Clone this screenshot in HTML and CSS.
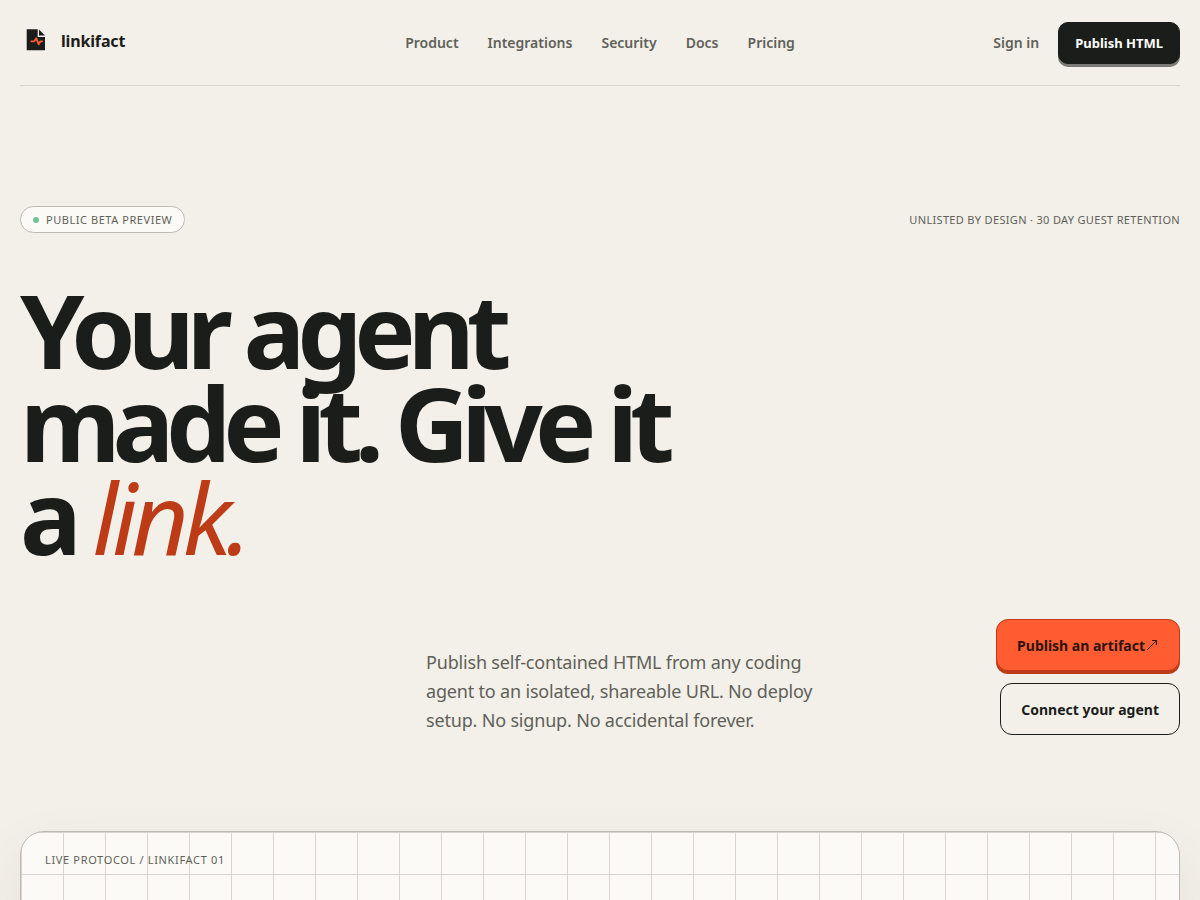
FILE: index.html
```html
<!DOCTYPE html>
<html lang="en">
<head>
    <meta charset="UTF-8">
    <meta name="viewport" content="width=device-width, initial-scale=1.0">
    <title>linkifact</title>
    <link rel="stylesheet" href="styles.css">
</head>
<body>
    <div class="page">
        <header class="site-header">
            <a class="brand" href="#">
                <svg class="brand-mark" viewBox="0 0 32 32" aria-hidden="true">
                    <path fill="#1b1d1a" d="M6.700 4.300h11v7.700H25v13.300H6.700z"/>
                    <path fill="#1b1d1a" d="M19 4.500L25 10.500h-6z"/>
                    <path fill="none" stroke="#ff5c31" stroke-width="1.800" stroke-linejoin="round" stroke-linecap="round" d="M11.300 16.300h3l2-3 2.400 6 1.600-3h1.800"/>
                </svg>
                <span>linkifact</span>
            </a>
            <nav class="site-nav">
                <a href="#">Product</a>
                <a href="#">Integrations</a>
                <a href="#">Security</a>
                <a href="#">Docs</a>
                <a href="#">Pricing</a>
            </nav>
            <div class="header-actions">
                <a class="sign-in" href="#">Sign in</a>
                <a class="button button-dark" href="#">Publish HTML</a>
            </div>
        </header>

        <main>
            <section class="hero">
                <div class="hero-meta">
                    <span class="pill"><span class="pill-dot"></span>Public beta preview</span>
                    <span class="hero-note">Unlisted by design · 30 day guest retention</span>
                </div>
                <h1>Your agent made it. Give it a <em>link.</em></h1>
                <div class="hero-bottom">
                    <p class="hero-copy">Publish self-contained HTML from any coding agent to an isolated, shareable URL. No deploy setup. No signup. No accidental forever.</p>
                    <div class="hero-actions">
                        <a class="button button-primary" href="#">
                            Publish an artifact
                            <svg class="arrow" viewBox="0 0 14 14" aria-hidden="true">
                                <path fill="none" stroke="currentColor" d="M2 12L11 3M7 2.500h4.500v4.500"/>
                            </svg>
                        </a>
                        <a class="button button-outline" href="#">Connect your agent</a>
                    </div>
                </div>
            </section>

            <section class="protocol">
                <p class="protocol-label">Live protocol / linkifact 01</p>
            </section>
        </main>
    </div>
</body>
</html>
```
FILE: styles.css
```css
:root {
    --ink: #1b1d1a;
    --muted: #5f6159;
    --paper: #f3f0e9;
    --card: #fcfaf6;
    --line: #d8d5ce;
    --line-strong: #bcbab2;
    --orange: #ff5c31;
    --rust: #bd3b17;
}

* {
    box-sizing: border-box;
}

body {
    margin: 0;
    background: var(--paper);
    color: var(--ink);
    font-family: "Noto Sans", sans-serif;
    font-size: 16px;
    overflow-x: hidden;
}

a {
    color: inherit;
    text-decoration: none;
}

.page {
    max-width: 1400px;
    margin: 0 auto;
    padding: 0 20px;
}

/* Header */
.site-header {
    display: grid;
    grid-template-columns: 1fr auto 1fr;
    align-items: center;
    min-height: 86px;
    border-bottom: 1px solid var(--line);
}

.brand {
    display: flex;
    align-items: center;
    gap: 9px;
    padding-bottom: 4px;
    font-size: 16px;
    font-weight: 700;
    letter-spacing: -0.01em;
}

.brand-mark {
    width: 32px;
    height: 32px;
}

.site-nav {
    display: flex;
    gap: 29px;
    color: var(--muted);
    font-size: 14px;
    font-weight: 600;
}

.header-actions {
    display: flex;
    align-items: center;
    justify-content: flex-end;
    gap: 19px;
}

.sign-in {
    color: var(--muted);
    font-size: 14px;
    font-weight: 600;
}

.button {
    display: inline-flex;
    align-items: center;
    justify-content: center;
    min-height: 52px;
    padding: 0 20px;
    border: 1px solid var(--ink);
    border-radius: 12px;
    font-size: 14px;
    font-weight: 700;
}

.button-dark {
    min-height: 42px;
    padding: 0 16px;
    border-radius: 10px;
    background: var(--ink);
    color: #ffffff;
    font-size: 13px;
    box-shadow: 0 3px 0 #7a7b76;
}

.button-primary {
    border-color: var(--rust);
    background: var(--orange);
    color: #2d150d;
    box-shadow: 0 3px 0 var(--rust);
}

.arrow {
    width: 14px;
    height: 14px;
}

/* Hero */
.hero {
    padding: 120px 0 96px;
}

.hero-meta {
    display: flex;
    align-items: center;
    justify-content: space-between;
    color: var(--muted);
    font-size: 11px;
    line-height: 15px;
    letter-spacing: 0.03em;
    text-transform: uppercase;
}

.pill {
    display: inline-flex;
    align-items: center;
    gap: 7px;
    padding: 5px 12px;
    border: 1px solid var(--line-strong);
    border-radius: 99px;
    background: var(--card);
    letter-spacing: 0.05em;
}

.pill-dot {
    width: 6px;
    height: 6px;
    border-radius: 50%;
    background: #6fc496;
}

h1 {
    max-width: 690px;
    margin: 50px 0 56px;
    font-size: 103px;
    line-height: 93px;
    font-weight: 700;
    letter-spacing: -8px;
}

h1 em {
    color: var(--rust);
    font-size: 99px;
    font-weight: 400;
    letter-spacing: -6px;
}

.hero-bottom {
    display: grid;
    grid-template-columns: 35% 1fr auto;
    align-items: end;
}

.hero-copy {
    grid-column: 2;
    max-width: 400px;
    margin: 0;
    color: var(--muted);
    font-size: 18px;
    line-height: 29px;
    letter-spacing: -0.01em;
}

.hero-actions {
    display: flex;
    flex-direction: column;
    align-items: flex-end;
    gap: 12px;
}

/* Protocol board */
.protocol {
    min-height: 560px;
    padding: 20px 24px;
    border: 1px solid var(--line-strong);
    border-radius: 24px;
    background-color: var(--card);
    background-image:
        linear-gradient(var(--line) 1px, transparent 1px),
        linear-gradient(90deg, var(--line) 1px, transparent 1px);
    background-size: 42px 42px;
    box-shadow: 0 24px 60px rgba(60, 50, 30, 0.08);
}

.protocol-label {
    margin: 0;
    color: var(--muted);
    font-size: 11px;
    line-height: 15px;
    letter-spacing: 0.06em;
    text-transform: uppercase;
}
```
